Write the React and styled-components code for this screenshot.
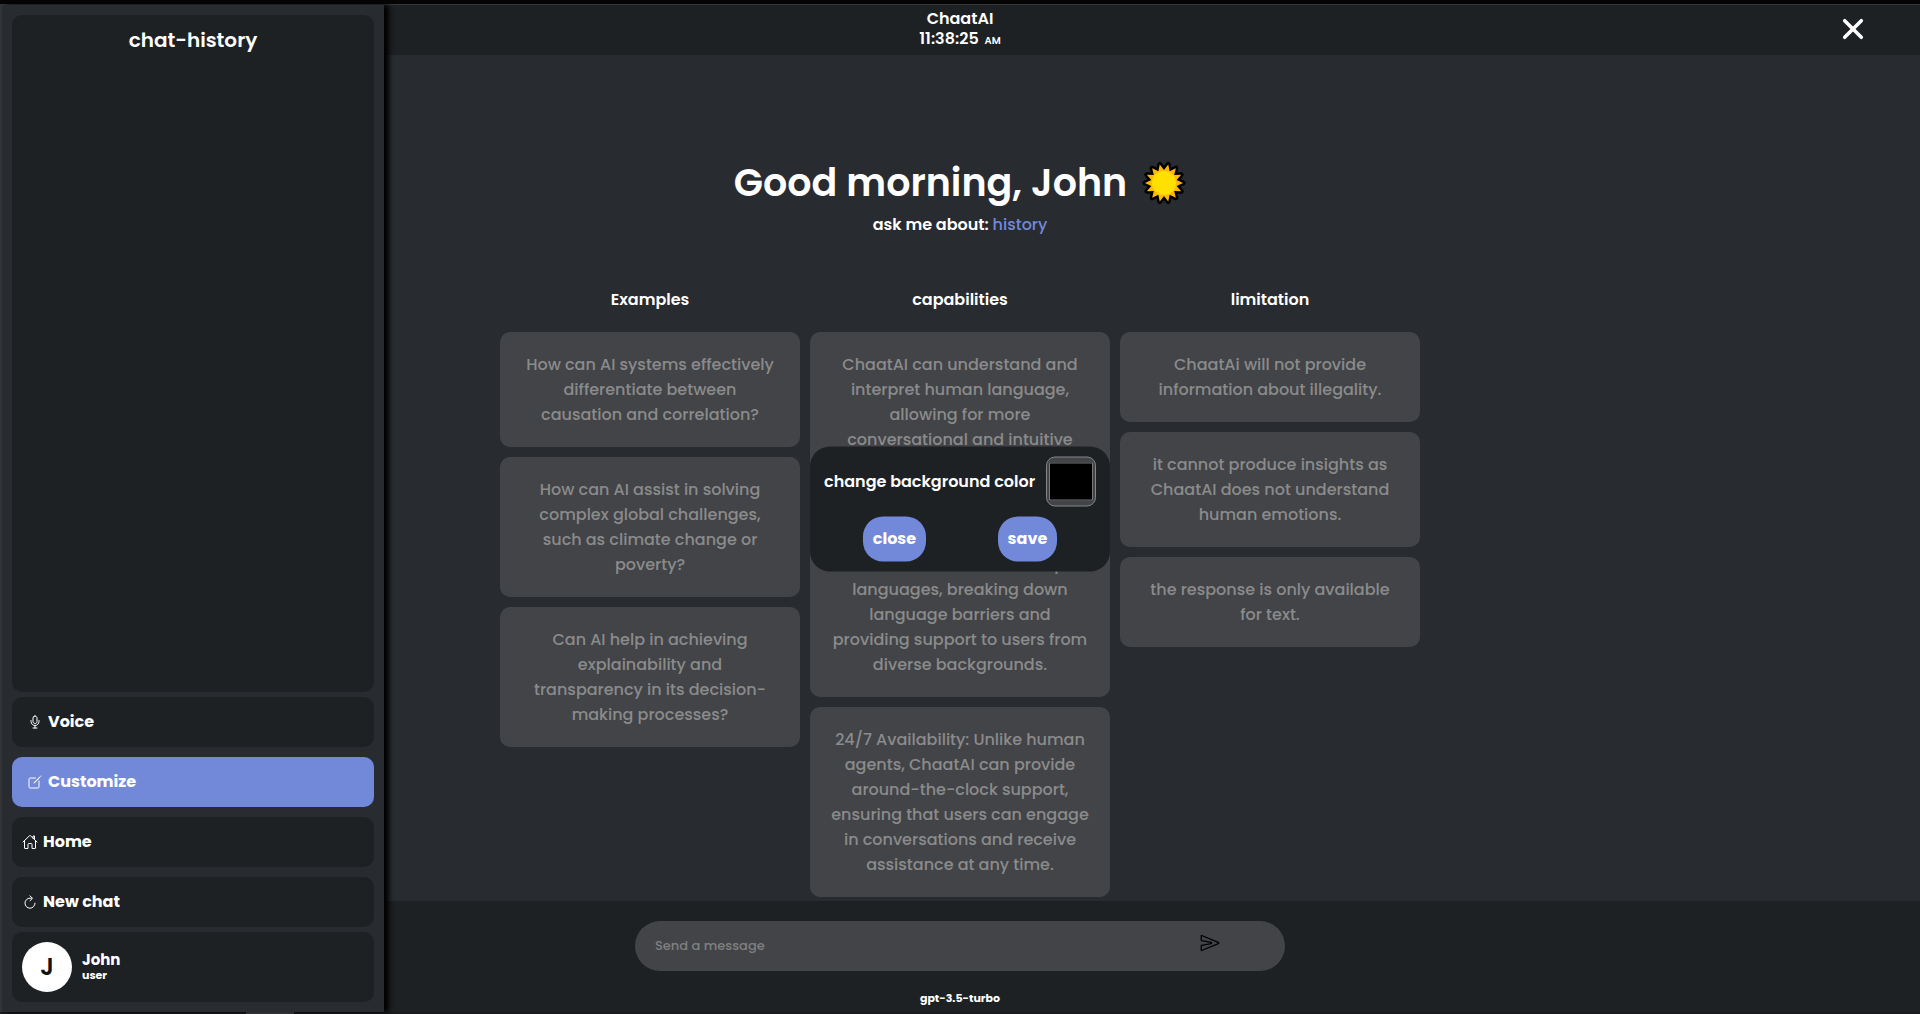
import React, { useState } from "react";
import styled, { createGlobalStyle } from "styled-components";
import {
  IoMicOutline,
  IoCreateOutline,
  IoHomeOutline,
  IoRefreshOutline,
  IoSendOutline,
  IoClose,
} from "react-icons/io5";

const GlobalStyle = createGlobalStyle`
  * { box-sizing: border-box; margin: 0; padding: 0; }
  body {
    background: #000;
    color: #fff;
    font-family: Poppins, Inter, "Liberation Sans", sans-serif;
    font-size: 16px;
    line-height: 24px;
    overflow: hidden;
  }
  button, input { font: inherit; color: inherit; border: 0; }
`;

const sideWidth = "384px";

const Window = styled.div`
  display: flex;
  flex-direction: column;
  height: 100vh;
  padding-top: 4px;
  background: #050505;
`;

const Shell = styled.div`
  position: relative;
  display: flex;
  flex: 1;
  min-height: 0;
  border-top: 1px solid #38383a;
  background: #282b30;
`;

const ScrollTrack = styled.div`
  height: 2px;
  padding-left: 246px;
  background: #1b1a1c;
`;

const ScrollThumb = styled.div`
  width: 48px;
  height: 2px;
  background: #4b494a;
`;

const Sidebar = styled.aside`
  position: relative;
  z-index: 1;
  display: flex;
  flex-direction: column;
  flex: 0 0 ${sideWidth};
  padding: 10px;
  border-left: 2px solid #343436;
  background: #282b30;
  box-shadow: 5px 0 5px #000;
`;

const History = styled.section`
  flex: 1;
  margin-bottom: 5px;
  padding: 10px;
  border-radius: 10px;
  background: #1e2124;
  text-align: center;
`;

const HistoryTitle = styled.h2`
  font-size: 20px;
  line-height: 30px;
  font-weight: 600;
`;

const Menu = styled.nav`
  display: flex;
  flex-direction: column;
  gap: 10px;
  margin-bottom: 5px;
`;

const MenuButton = styled.button`
  display: flex;
  align-items: center;
  gap: 5px;
  height: 50px;
  padding: 0 ${(p) => (p.$inset ? "15px" : "10px")};
  border-radius: 10px;
  background: ${(p) => (p.$active ? "#7289da" : "#1e2124")};
  font-weight: 700;
  cursor: pointer;
`;

const User = styled.div`
  display: flex;
  align-items: center;
  gap: 10px;
  height: 70px;
  padding: 10px;
  border-radius: 10px;
  background: #1e2124;
`;

const Avatar = styled.div`
  display: grid;
  place-items: center;
  width: 50px;
  height: 50px;
  border-radius: 50%;
  background: #fff;
  color: #111;
  font-size: 24px;
  font-weight: 600;
`;

const UserName = styled.p`
  font-size: 15px;
  font-weight: 700;
  line-height: 16px;
`;

const UserRole = styled.p`
  font-size: 11px;
  line-height: 14px;
  font-weight: 700;
`;

const Main = styled.main`
  display: flex;
  flex: 1;
  flex-direction: column;
  min-width: 0;
`;

const Header = styled.header`
  display: grid;
  grid-template-columns: 1fr ${sideWidth};
  align-items: center;
  height: 50px;
  background: #1e2124;
`;

const Brand = styled.div`
  text-align: center;
  font-weight: 600;
  line-height: 20px;
`;

const BrandName = styled.h1`
  font-size: 16px;
  font-weight: 600;
`;

const Meridiem = styled.span`
  margin-left: 2px;
  font-size: 10px;
`;

const CloseButton = styled.button`
  justify-self: end;
  display: grid;
  margin-right: 48px;
  padding-bottom: 2px;
  background: none;
  cursor: pointer;
`;

const Chat = styled.section`
  flex: 1;
  min-height: 0;
  padding: 98px ${sideWidth} 0 0;
  overflow: hidden;
`;

const Greeting = styled.h2`
  display: flex;
  align-items: center;
  justify-content: center;
  gap: 15px;
  font-size: 38px;
  line-height: 60px;
  font-weight: 600;
`;

const Prompt = styled.p`
  text-align: center;
  font-weight: 600;
`;

const Topic = styled.a`
  color: #7289da;
  font-weight: 500;
  text-decoration: none;
`;

const Columns = styled.div`
  display: flex;
  justify-content: center;
  align-items: flex-start;
  gap: 10px;
  margin-top: 51px;
`;

const Column = styled.section`
  display: flex;
  flex-direction: column;
  gap: 10px;
  width: 300px;
  text-align: center;
`;

const ColumnTitle = styled.h3`
  margin-bottom: 10px;
  font-size: 16px;
  font-weight: 600;
`;

const Card = styled.p`
  padding: 20px 0;
  border-radius: 10px;
  background: #424448;
  color: #8b8b8b;
  font-weight: 500;
  line-height: 25px;
  white-space: pre-line;
`;

const Footer = styled.footer`
  display: flex;
  flex-direction: column;
  align-items: center;
  gap: 18px;
  height: 111px;
  padding: 20px ${sideWidth} 0 0;
  background: #1e2124;
`;

const Composer = styled.form`
  display: flex;
  align-items: center;
  width: 650px;
  height: 50px;
  padding: 0 65px 0 20px;
  border-radius: 25px;
  background: #424448;
`;

const MessageInput = styled.input`
  flex: 1;
  background: none;
  font-size: 13px;
  font-weight: 500;
  outline: 0;
  &::placeholder { color: #808080; opacity: 1; }
`;

const SendButton = styled.button`
  display: grid;
  padding-bottom: 6px;
  background: none;
  color: #000;
  cursor: pointer;
`;

const Model = styled.p`
  font-size: 11px;
  line-height: 18px;
  font-weight: 700;
`;

const Dialog = styled.div`
  position: absolute;
  z-index: 2;
  top: 50%;
  left: 50%;
  transform: translate(-50%, -50%);
  display: flex;
  flex-direction: column;
  gap: 10px;
  width: 300px;
  padding: 10px 14px;
  border-radius: 20px;
  background: #1e2124;
`;

const ColorField = styled.label`
  display: flex;
  align-items: center;
  justify-content: space-between;
  font-weight: 600;
  white-space: nowrap;
`;

const ColorInput = styled.input`
  width: 50px;
  height: 50px;
  padding: 5px 2px;
  border: 1px solid #85868a;
  border-radius: 9px;
  background: #424448;
  &::-webkit-color-swatch-wrapper { padding: 0; }
  &::-webkit-color-swatch { border: 1px solid #777; }
`;

const Actions = styled.div`
  display: flex;
  justify-content: space-around;
  padding: 0 3px;
`;

const ActionButton = styled.button`
  height: 45px;
  padding: 0 10px;
  border-radius: 20px;
  background: #7289da;
  font-weight: 700;
  cursor: pointer;
`;

const menu = [
  { label: "Voice", Icon: IoMicOutline, inset: true },
  { label: "Customize", Icon: IoCreateOutline, inset: true, active: true },
  { label: "Home", Icon: IoHomeOutline },
  { label: "New chat", Icon: IoRefreshOutline },
];

const columns = [
  {
    title: "Examples",
    cards: [
      "How can AI systems effectively\ndifferentiate between\ncausation and correlation?",
      "How can AI assist in solving\ncomplex global challenges,\nsuch as climate change or\npoverty?",
      "Can AI help in achieving\nexplainability and\ntransparency in its decision-\nmaking processes?",
    ],
  },
  {
    title: "capabilities",
    cards: [
      "ChaatAI can understand and\ninterpret human language,\nallowing for more\nconversational and intuitive\ninteractions.",
      "Multilingual Support: ChaatAI\ncan communicate in multiple\nlanguages, breaking down\nlanguage barriers and\nproviding support to users from\ndiverse backgrounds.",
      "24/7 Availability: Unlike human\nagents, ChaatAI can provide\naround-the-clock support,\nensuring that users can engage\nin conversations and receive\nassistance at any time.",
    ],
  },
  {
    title: "limitation",
    cards: [
      "ChaatAi will not provide\ninformation about illegality.",
      "it cannot produce insights as\nChaatAI does not understand\nhuman emotions.",
      "the response is only available\nfor text.",
    ],
  },
];

const rays = Array.from({ length: 28 }, (_, i) => {
  const angle = (i * Math.PI) / 14 - Math.PI / 2;
  const radius = i % 2 ? 19 : 13;
  return `${22 + radius * Math.cos(angle)},${22 + radius * Math.sin(angle)}`;
}).join(" ");

function Sun() {
  return (
    <svg width="44" height="44" viewBox="0 0 44 44" aria-hidden="true">
      <polygon points={rays} fill="#000" stroke="#000" strokeWidth="5" strokeLinejoin="round" />
      <polygon points={rays} fill="#ffb900" />
      <circle cx="22" cy="22" r="12" fill="#ffe000" />
    </svg>
  );
}

export default function App() {
  const [color, setColor] = useState("#000000");
  return (
    <Window>
      <GlobalStyle />
      <Shell>
        <Sidebar>
          <History>
            <HistoryTitle>chat-history</HistoryTitle>
          </History>
          <Menu>
            {menu.map(({ label, Icon, inset, active }) => (
              <MenuButton key={label} type="button" $inset={inset} $active={active}>
                <Icon size={16} />
                {label}
              </MenuButton>
            ))}
          </Menu>
          <User>
            <Avatar>J</Avatar>
            <div>
              <UserName>John</UserName>
              <UserRole>user</UserRole>
            </div>
          </User>
        </Sidebar>
        <Main>
          <Header>
            <Brand>
              <BrandName>ChaatAI</BrandName>
              <p>
                11:38:25 <Meridiem>AM</Meridiem>
              </p>
            </Brand>
            <CloseButton type="button" aria-label="Close">
              <IoClose size={38} />
            </CloseButton>
          </Header>
          <Chat>
            <Greeting>
              Good morning, John
              <Sun />
            </Greeting>
            <Prompt>
              ask me about: <Topic href="#history">history</Topic>
            </Prompt>
            <Columns>
              {columns.map((column) => (
                <Column key={column.title}>
                  <ColumnTitle>{column.title}</ColumnTitle>
                  {column.cards.map((text) => (
                    <Card key={text}>{text}</Card>
                  ))}
                </Column>
              ))}
            </Columns>
          </Chat>
          <Footer>
            <Composer onSubmit={(e) => e.preventDefault()}>
              <MessageInput type="text" aria-label="Message" placeholder="Send a message" />
              <SendButton type="submit" aria-label="Send">
                <IoSendOutline size={20} />
              </SendButton>
            </Composer>
            <Model>gpt-3.5-turbo</Model>
          </Footer>
        </Main>
        <Dialog role="dialog" aria-label="Customize">
          <ColorField>
            change background color
            <ColorInput type="color" value={color} onChange={(e) => setColor(e.target.value)} />
          </ColorField>
          <Actions>
            <ActionButton type="button">close</ActionButton>
            <ActionButton type="button">save</ActionButton>
          </Actions>
        </Dialog>
      </Shell>
      <ScrollTrack>
        <ScrollThumb />
      </ScrollTrack>
    </Window>
  );
}
